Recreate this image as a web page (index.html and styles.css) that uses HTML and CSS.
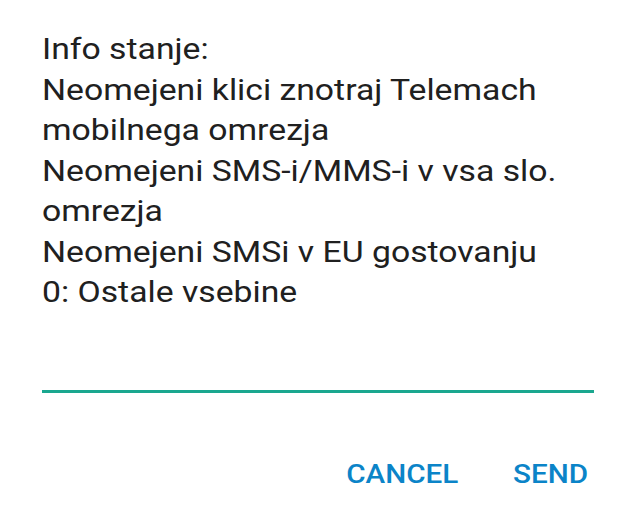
FILE: index.html
```html
<!DOCTYPE html>
<html>
<head>
<meta charset="utf-8">
<title>USSD</title>
<link rel="stylesheet" href="styles.css">
</head>
<body>
<div class="dialog">
<div class="message">Info stanje:<br>Neomejeni klici znotraj Telemach mobilnega omrezja<br>Neomejeni SMS-i/MMS-i v vsa slo. omrezja<br>Neomejeni SMSi v EU gostovanju<br>0: Ostale vsebine</div>
<div class="field"></div>
<div class="buttons">
<span class="btn">CANCEL</span>
<span class="btn">SEND</span>
</div>
</div>
</body>
</html>
```

FILE: styles.css
```css
body{
margin:0;
background:#fff;
font-family:Roboto,"Noto Sans",sans-serif;
}
.dialog{
width:640px;
height:517px;
padding:29px 46px 0 42px;
box-sizing:border-box;
}
/* screenshot is stretched sideways */
.message{
font-size:29px;
line-height:40.5px;
color:#202020;
width:470px;
transform:scaleX(1.163);
transform-origin:left top;
}
.field{
margin-top:77px;
height:3px;
background:#1aa78f;
width:552px;
}
.buttons{
display:flex;
justify-content:flex-end;
gap:47px;
margin-top:66px;
padding-right:5px;
transform:scaleX(1.163);
transform-origin:right top;
}
.btn{
font-size:25.5px;
font-weight:500;
color:#0b84c8;
}
```
